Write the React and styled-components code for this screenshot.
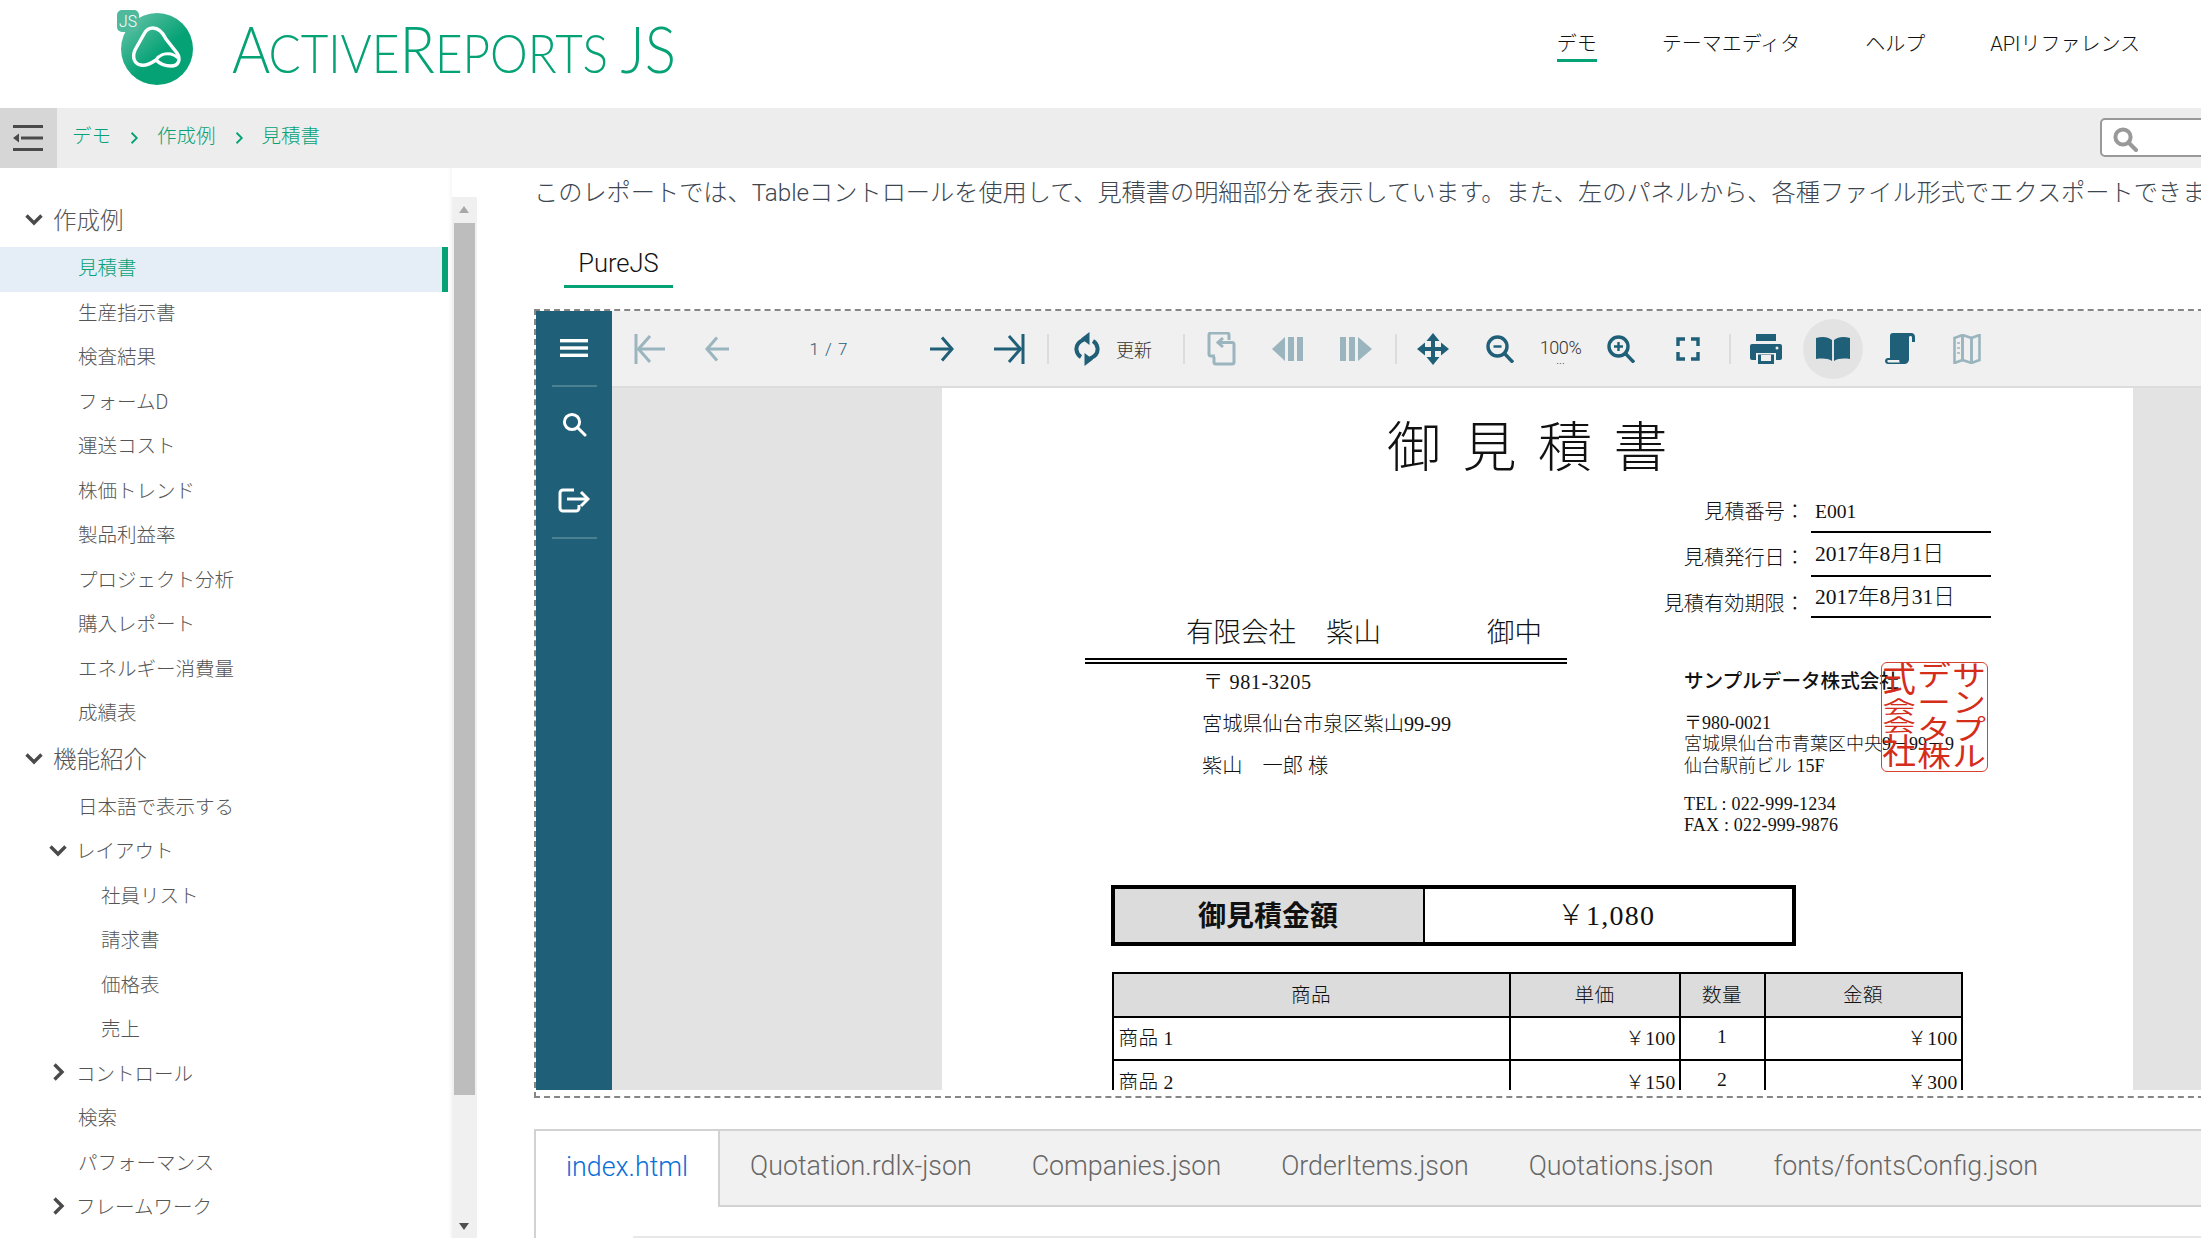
import React from "react";
import styled, { createGlobalStyle } from "styled-components";

const GREEN = "#05a275";
const TEAL = "#1f5f77";
const UI = `"Roboto", "Noto Sans CJK JP", sans-serif`;
const DOC = `"Liberation Serif", "Noto Sans CJK JP", serif`;

const Global = createGlobalStyle`
  html, body { margin: 0; padding: 0; background: #fff; overflow: hidden; }
  body { width: 2201px; height: 1238px; font-family: ${UI}; }
  * { box-sizing: border-box; }
`;

const Shell = styled.div`
  width: 2201px; height: 1238px; overflow: hidden; display: flex; flex-direction: column;
`;

/* header */
const Header = styled.header`
  height: 108px; flex: none; display: flex; align-items: flex-start; justify-content: space-between;
  padding: 0 61px 0 117px;
`;
const Logo = styled.svg`display: block; margin-top: 8px;`;
const Nav = styled.nav`display: flex; gap: 65px; padding-top: 29px;`;
const NavLink = styled.a`
  display: block; height: 33px; font-size: 20px; line-height: 30px; font-weight: 300; color: #111;
  border-bottom: 3px solid ${p => (p.$active ? GREEN : "transparent")};
`;

/* crumbs */
const Crumbs = styled.div`
  height: 60px; flex: none; background: #ededed; display: flex; align-items: center; position: relative;
`;
const MenuToggle = styled.div`
  width: 57px; height: 60px; background: #d6d6d6; display: flex; align-items: center; justify-content: center; padding-right: 2px;
`;
const CrumbList = styled.div`display: flex; align-items: center; margin-left: 15px; gap: 16px;`;
const Crumb = styled.span`font-size: 19.5px; font-weight: 300; color: ${GREEN}; line-height: 1; margin-top: -2px;`;
const SearchBox = styled.div`
  position: absolute; left: 2100px; top: 10px; width: 160px; height: 39px;
  background: #fff; border: 2px solid #999; border-radius: 5px; padding: 6px 0 0 10px;
`;

/* body */
const Body = styled.div`flex: 1; display: flex; min-height: 0;`;
const Sidebar = styled.aside`
  width: 477px; flex: none; display: flex; position: relative; overflow: hidden;
`;
const Tree = styled.div`width: 452px; padding-top: 30px; box-shadow: inset -5px 0 4px -4px #f2f2f2;`;
const GroupTitle = styled.div`
  height: 49px; display: flex; align-items: center; font-size: 23.5px; font-weight: 300; color: #555;
  padding: 0 0 7px 24px; gap: 9px;
`;
const TreeRow = styled.div`
  height: 44.5px; display: flex; align-items: center; font-size: 19.5px; font-weight: 300;
  padding: 0 0 5px ${p => p.$indent}px; gap: ${p => p.$gap || 0}px;
  color: ${p => (p.$active ? GREEN : "#555")};
  margin-right: ${p => (p.$active ? "4px" : "0")};
  background: ${p => (p.$active ? "#e5edf6" : "transparent")};
  border-right: ${p => (p.$active ? `6px solid ${GREEN}` : "none")};
`;
const Scrollbar = styled.div`
  width: 25px; flex: none; background: #f0f0f0; position: relative; margin-top: 29px;
`;
const Thumb = styled.div`
  position: absolute; left: 2px; top: 26px; width: 21px; height: 872px; background: #bdbdbd;
`;
const ArrowUp = styled.div`
  position: absolute; left: 7px; top: 9px; border-left: 5.5px solid transparent; border-right: 5.5px solid transparent;
  border-bottom: 7px solid #a8a8a8;
`;
const ArrowDown = styled.div`
  position: absolute; left: 7px; top: 1026px; border-left: 5.5px solid transparent; border-right: 5.5px solid transparent;
  border-top: 7px solid #505050;
`;

/* main */
const Main = styled.main`flex: 1; min-width: 0; padding-left: 57px; display: flex; flex-direction: column;`;
const Intro = styled.p`
  margin: 0; height: 48px; line-height: 50px; font-size: 24.2px; font-weight: 300; color: #3c4650; white-space: nowrap;
`;
const DemoTabs = styled.div`display: flex; padding-left: 30px; height: 72px; padding-top: 22px;`;
const DemoTab = styled.div`
  width: 109px; height: 50px; text-align: center; font-size: 25.5px; line-height: 50px; font-weight: 300; color: #111;
  border-bottom: 3px solid ${GREEN};
`;
const Viewer = styled.div`
  width: 1700px; height: 789px; flex: none; margin-top: 21px; padding: 0 0 6px 0; border: 2px dashed #868686; border-right: none;
  display: flex; margin-left: 0;
`;
const ViewerSide = styled.div`
  width: 76px; flex: none; background: ${TEAL}; display: flex; flex-direction: column; align-items: center;
`;
const SideBtn = styled.div`
  height: 76px; width: 45px; display: flex; align-items: center; justify-content: center;
  border-bottom: 2px solid ${p => (p.$rule ? "rgba(255,255,255,.2)" : "transparent")}; color: #fff;
`;
const ViewerMain = styled.div`flex: 1; min-width: 0; display: flex; flex-direction: column;`;
const Toolbar = styled.div`
  height: 77px; flex: none; background: #f0f0f0; border-bottom: 2px solid #dcdcdc; display: flex; align-items: center; padding-left: 4px;
`;
const ToolBtn = styled.div`
  width: 67px; height: 60px; flex: none; display: flex; align-items: center; justify-content: center;
  color: ${TEAL}; opacity: ${p => (p.$off ? 0.4 : 1)};
`;
const ActiveBtn = styled.div`
  width: 60px; height: 60px; margin: 0 3.5px; flex: none; border-radius: 50%; background: #e3e3e3; display: flex; align-items: center; justify-content: center; color: ${TEAL};
`;
const Sep = styled.div`
  width: 2px; height: 30px; flex: none; background: #dcdcdc; margin: 0 ${p => p.$r}px 0 ${p => p.$l}px;
`;
const PageLabel = styled.div`
  width: 158px; flex: none; text-align: center; font-size: 17px; font-weight: 300; color: ${TEAL}; letter-spacing: 1px;
`;
const RefreshLabel = styled.div`
  width: 36px; flex: none; margin-left: -4px; font-size: 18px; font-weight: 300; color: #333; white-space: nowrap;
`;
const ZoomLabel = styled.div`
  width: 54px; flex: none; text-align: center; font-size: 18px; font-weight: 300; color: #333; line-height: 18px; padding-top: 4px;
  letter-spacing: -.4px;
`;
const Dots = styled.div`font-size: 12px; line-height: 6px; color: #333; letter-spacing: 0;`;
const Stage = styled.div`
  flex: 1; min-height: 0; background: #e3e3e3; padding-left: 330px; overflow: hidden;
`;
const ReportPage = styled.div`
  width: 1191px; height: 703px; background: #fff; position: relative; overflow: hidden; color: #111;
  font-family: ${DOC}; font-weight: 300;
`;
const Field = styled.div`
  position: absolute; white-space: nowrap; line-height: 30px;
  top: ${p => p.$cy - 15}px;
  ${p => (p.$right !== undefined ? `right: ${1191 - p.$right}px;` : `left: ${p.$x}px;`)}
  font-size: ${p => p.$size || 20.2}px;
  font-weight: ${p => p.$weight || 300};
  letter-spacing: ${p => p.$track || 0}px;
`;
const ReportTitle = styled(Field)`word-spacing: 8px; line-height: 60px; top: 31px;`;
const Rule = styled.div`
  position: absolute; background: #000; height: 2px;
  left: ${p => p.$x}px; width: ${p => p.$w}px; top: ${p => p.$y}px;
`;
const Stamp = styled.div`
  position: absolute; left: 939px; top: 274px; width: 107px; height: 110px; border: 1.5px solid #d8402e; border-radius: 6px;
  display: grid; grid-template-columns: repeat(3, 1fr); color: #d42d1a; overflow: hidden;
`;
const StampCol = styled.div`
  display: flex; flex-direction: column; align-items: center; justify-content: space-between;
`;
const StampChar = styled.span`
  display: block; font-size: 28px; height: ${p => p.$h || 27}px; line-height: ${p => p.$h || 27}px;
  transform: scale(1.2, ${p => p.$sy || 1}); font-weight: 400;
`;
const AmountBox = styled.div`
  position: absolute; left: 169px; top: 497px; width: 685px; height: 61px; border: 4px solid #000; display: flex;
`;
const AmountLabel = styled.div`
  width: 310px; background: #dcdcdc; border-right: 2px solid #000; display: flex; align-items: center; justify-content: center;
  font-size: 28px; font-weight: 700; padding: 0 2px 3px 0;
`;
const AmountValue = styled.div`
  flex: 1; display: flex; align-items: center; justify-content: center; font-size: 28px; padding: 0 5px 6px 0; font-weight: 300; letter-spacing: 1.2px;
`;
const QuoteTable = styled.table`
  position: absolute; left: 169.5px; top: 584px; width: 849px; table-layout: fixed; border-collapse: collapse; font-size: 19.6px;
  border: 2px solid #000; letter-spacing: .3px;
`;
const Cell = styled.td`
  height: 43.5px; padding: 0 3px 3px; border: 2px solid #000; text-align: ${p => p.$align || "center"};
  background: ${p => (p.$head ? "#dcdcdc" : "#fff")}; font-weight: 300;
  padding-left: ${p => (p.$align === "left" ? "5px" : "3px")};
`;

/* code tabs */
const CodePanel = styled.div`
  margin-top: 31px; flex: 1; border-left: 2px solid #d2d2d2; width: 1700px; position: relative;
`;
const CodeTabs = styled.div`
  height: 78px; background: #f1f1f1; border-top: 2px solid #d2d2d2; border-bottom: 2px solid #d2d2d2; display: flex; align-items: stretch;
`;
const CodeTab = styled.div`
  padding: 0 30px; display: flex; align-items: center; font-size: 26.8px; font-weight: 300; white-space: nowrap; padding-bottom: 4px;
  color: ${p => (p.$active ? "#0a6fd6" : "#666")};
  background: ${p => (p.$active ? "#fff" : "transparent")};
  border-right: ${p => (p.$active ? "2px solid #d2d2d2" : "none")};
  margin-bottom: ${p => (p.$active ? "-2px" : "0")};
`;
const CodeLine = styled.div`
  position: absolute; left: 97px; right: 0; top: 107px; height: 2px; background: #e8e8e8;
`;

/* icons */
const Icon = ({ w = 32, h = 32, children, fill = "none", sw = 3 }) => (
  <svg width={w} height={h} viewBox={`0 0 ${w} ${h}`} fill={fill} stroke={fill === "none" ? "currentColor" : "none"} strokeWidth={sw}>
    {children}
  </svg>
);
const Chevron = ({ dir = "down", size = 20, color = "#4a4a4a", sw = 3.4 }) => (
  <svg width={size} height={size} viewBox="0 0 20 20" fill="none" stroke={color} strokeWidth={sw} style={{ flex: "none" }}>
    {dir === "down" ? <path d="M2.5 6.5 10 14l7.5-7.5" /> : <path d="M6.5 2.5 14 10l-7.5 7.5" />}
  </svg>
);

const BrandLogo = () => (
  <Logo width="570" height="84" viewBox="0 0 570 84">
    <defs>
      <linearGradient id="lg" x1="0.1" y1="0.05" x2="0.8" y2="0.85">
        <stop offset="0" stopColor="#62c2a6" />
        <stop offset="0.65" stopColor="#05a275" />
      </linearGradient>
    </defs>
    <circle cx="40" cy="41" r="36" fill="url(#lg)" />
    <rect x="0" y="2" width="22" height="22" rx="5" fill="#4fb99b" />
    <text x="11" y="19" textAnchor="middle" fontFamily="Roboto, sans-serif" fontSize="16" fontWeight="300" fill="#fff" textLength="18" lengthAdjust="spacingAndGlyphs">JS</text>
    <path d="M36 20C42 20 46 25 49 31L60 45C64 51 62 58 54 58C47 58 43 56 39 52C33 56 28 58 24 57C17 56 15 49 18 42L27 26C29 22 32 20 36 20Z" fill="none" stroke="#fff" strokeWidth="3.4" />
    <path d="M39 52C42 47 48 45 54 46C58 47 60 49 61 50" stroke="#fff" strokeWidth="3" fill="none" />
    <text x="115" y="65" fill={GREEN} fontFamily="Lato, Roboto, sans-serif" fontWeight="300" textLength="444" lengthAdjust="spacingAndGlyphs">
      <tspan fontSize="65">A</tspan>
      <tspan fontSize="53" dx="-2">CTIVE</tspan>
      <tspan fontSize="65">R</tspan>
      <tspan fontSize="53">EPORTS</tspan>
      <tspan fontSize="65" dx="14">JS</tspan>
    </text>
  </Logo>
);

const MenuBackIcon = () => (
  <svg width="30" height="26" viewBox="0 0 30 26" fill="#4a4a4a">
    <rect x="0" y="0" width="30" height="3" />
    <rect x="8" y="11.5" width="22" height="3" />
    <rect x="0" y="23" width="30" height="3" />
    <path d="M0 13 6 8.5v9Z" />
  </svg>
);
const SearchGlyph = ({ color = "#999", size = 26, sw = 4 }) => (
  <svg width={size} height={size} viewBox="0 0 26 26" fill="none" stroke={color} strokeWidth={sw}>
    <circle cx="11" cy="11" r="7.6" />
    <path d="m16.5 16.5 7.5 7.5" strokeLinecap="round" />
  </svg>
);

const FirstIcon = () => (
  <Icon w={32} h={32}><path d="M2 1v30" /><path d="M31 16H5" /><path d="M16 3 4.5 16 16 29" /></Icon>
);
const PrevIcon = () => (
  <Icon w={26} h={26}><path d="M25 13H3" /><path d="M13 1.5 3 13l10 11.5" /></Icon>
);
const NextIcon = () => (
  <Icon w={26} h={26}><path d="M1 13h22" /><path d="M13 1.5 23 13 13 24.500" /></Icon>
);
const LastIcon = () => (
  <Icon w={32} h={32}><path d="M30 1v30" /><path d="M1 16h26" /><path d="m16 3 11.500 13L16 29" /></Icon>
);
const RefreshIcon = () => (
  <Icon w={26} h={34} sw={4}>
    <path d="M10 7.500C4 10 2 14 2.500 18c.4 3 2 5.500 4.500 7" />
    <path d="M16 26.500c6-2.500 8-6.500 7.500-10.500-.4-3-2-5.500-4.500-7" />
    <path d="M15.500 0v13L7 6.500Z" fill="currentColor" stroke="none" />
    <path d="M10.500 34V21l8.500 6.500Z" fill="currentColor" stroke="none" />
  </Icon>
);
const GalleyIcon = () => (
  <Icon w={30} h={34} sw={3}>
    <path d="M22 8V3a2 2 0 0 0-2-2H4a2 2 0 0 0-2 2v19a2 2 0 0 0 2 2h4" />
    <path d="M12 10.500h13a2 2 0 0 1 2 2V30a2 2 0 0 1-2 2H9a2 2 0 0 1-2-2v-5" />
    <path d="m16 6-5 4.500 5 4.500" />
  </Icon>
);
const PrevSectionIcon = () => (
  <Icon w={34} h={24} fill="currentColor">
    <path d="M0 12 13 0v24Z" /><rect x="16" y="0" width="6" height="24" /><rect x="25" y="0" width="6" height="24" />
  </Icon>
);
const NextSectionIcon = () => (
  <Icon w={34} h={24} fill="currentColor">
    <rect x="1" y="0" width="6" height="24" /><rect x="10" y="0" width="6" height="24" /><path d="M33 12 19 0v24Z" />
  </Icon>
);
const PanIcon = () => (
  <Icon w={32} h={32} fill="currentColor">
    <path d="M16 0l6.500 8h-4.500v6h6v-4.500L32 16l-8 6.500V18h-6v6h4.500L16 32l-6.500-8H14v-6H8v4.500L0 16l8-6.500V14h6V8H9.500Z" />
  </Icon>
);
const ZoomOutIcon = () => (
  <Icon w={28} h={28} sw={3.4}>
    <circle cx="11.500" cy="11.500" r="9.500" /><path d="m18 18 9 9.500" /><path d="M7.500 11.500h8" strokeWidth="2.400" />
  </Icon>
);
const ZoomInIcon = () => (
  <Icon w={28} h={28} sw={3.4}>
    <circle cx="11.500" cy="11.500" r="9.500" /><path d="m18 18 9 9.500" /><path d="M7 11.500h9M11.500 7v9" strokeWidth="2.400" />
  </Icon>
);
const FullIcon = () => (
  <Icon w={24} h={24} sw={3.4}>
    <path d="M2 9V2h7M15 2h7v7M22 15v7h-7M9 22H2v-7" />
  </Icon>
);
const PrintIcon = () => (
  <Icon w={32} h={30} fill="currentColor">
    <rect x="6" y="0" width="20" height="7" />
    <path d="M2 10h28a2 2 0 0 1 2 2v12a2 2 0 0 1-2 2h-4v-7H6v7H2a2 2 0 0 1-2-2V12a2 2 0 0 1 2-2Z" />
    <path d="M8 20.500h16V30H8Z" />
    <rect x="11" y="21" width="10" height="6" fill="#f0f0f0" />
    <circle cx="27" cy="14" r="1.500" fill="#f0f0f0" />
  </Icon>
);
const BookIcon = () => (
  <Icon w={34} h={28} fill="currentColor">
    <path d="M16 5v21c-4-2.500-9-3-16-2V3c7-2 12-1 16 2Z" />
    <path d="M18 5v21c4-2.500 9-3 16-2V3c-7-2-12-1-16 2Z" />
  </Icon>
);
const ScrollIcon = () => (
  <Icon w={30} h={32} fill="currentColor">
    <path d="M5 3a3 3 0 0 1 3-3h18c2.500 0 4 1.500 4 4v5h-3V4.500c0-1-.6-1.500-1.500-1.500S24 3.500 24 4.500V26c0 3-2 5-5 5H3c-2 0-3-1.500-3-3s1-3 3-3h2Z" />
    <path d="M3 27c-1 .5-1 2.500 1 2.500h11c-1-1-1-2-.5-2.500Z" fill="#f0f0f0" />
  </Icon>
);
const MapIcon = () => (
  <Icon w={28} h={30} sw={2.600}>
    <path d="M1.500 4 9.500 1v25l-8 3Z" fill="none" /><path d="m9.500 1 9 3v25l-9-3Z" /><path d="m18.500 4 8-3v25l-8 3Z" />
    <path d="M4 9h3M4 14h3M4 19h3" strokeWidth="1.600" />
  </Icon>
);
const HamburgerIcon = () => (
  <svg width="28" height="18" viewBox="0 0 28 18" fill="#fff">
    <rect width="28" height="3.400" y="0" /><rect width="28" height="3.400" y="7.300" /><rect width="28" height="3.400" y="14.600" />
  </svg>
);
const ExportIcon = () => (
  <svg width="32" height="28" viewBox="0 0 32 28" fill="none" stroke="#fff" strokeWidth="3">
    <path d="M16 4H5a3 3 0 0 0-3 3v15a3 3 0 0 0 3 3h13a3 3 0 0 0 3-3v-3" />
    <path d="M9 13h20" />
    <path d="m23 6 7 7-7 7" />
  </svg>
);

const items1 = ["生産指示書", "検査結果", "フォームD", "運送コスト", "株価トレンド", "製品利益率", "プロジェクト分析", "購入レポート", "エネルギー消費量", "成績表"];

export default function App() {
  return (
    <Shell>
      <Global />
      <Header>
        <BrandLogo />
        <Nav>
          <NavLink $active>デモ</NavLink>
          <NavLink>テーマエディタ</NavLink>
          <NavLink>ヘルプ</NavLink>
          <NavLink>APIリファレンス</NavLink>
        </Nav>
      </Header>
      <Crumbs>
        <MenuToggle><MenuBackIcon /></MenuToggle>
        <CrumbList>
          <Crumb>デモ</Crumb>
          <Chevron dir="right" size={14} color={GREEN} sw={2.6} />
          <Crumb>作成例</Crumb>
          <Chevron dir="right" size={14} color={GREEN} sw={2.6} />
          <Crumb>見積書</Crumb>
        </CrumbList>
        <SearchBox><SearchGlyph /></SearchBox>
      </Crumbs>
      <Body>
        <Sidebar>
          <Tree>
            <GroupTitle><Chevron />作成例</GroupTitle>
            <TreeRow $indent={78} $active>見積書</TreeRow>
            {items1.map(t => <TreeRow key={t} $indent={78}>{t}</TreeRow>)}
            <GroupTitle><Chevron />機能紹介</GroupTitle>
            <TreeRow $indent={78}>日本語で表示する</TreeRow>
            <TreeRow $indent={48} $gap={8}><Chevron />レイアウト</TreeRow>
            <TreeRow $indent={101}>社員リスト</TreeRow>
            <TreeRow $indent={101}>請求書</TreeRow>
            <TreeRow $indent={101}>価格表</TreeRow>
            <TreeRow $indent={101}>売上</TreeRow>
            <TreeRow $indent={48} $gap={8}><Chevron dir="right" />コントロール</TreeRow>
            <TreeRow $indent={78}>検索</TreeRow>
            <TreeRow $indent={78}>パフォーマンス</TreeRow>
            <TreeRow $indent={48} $gap={8}><Chevron dir="right" />フレームワーク</TreeRow>
          </Tree>
          <Scrollbar><ArrowUp /><Thumb /><ArrowDown /></Scrollbar>
        </Sidebar>
        <Main>
          <Intro>このレポートでは、Tableコントロールを使用して、見積書の明細部分を表示しています。また、左のパネルから、各種ファイル形式でエクスポートできます。</Intro>
          <DemoTabs><DemoTab>PureJS</DemoTab></DemoTabs>
          <Viewer>
            <ViewerSide>
              <SideBtn $rule><HamburgerIcon /></SideBtn>
              <SideBtn><SearchGlyph color="#fff" size={26} sw={3} /></SideBtn>
              <SideBtn $rule><ExportIcon /></SideBtn>
            </ViewerSide>
            <ViewerMain>
              <Toolbar>
                <ToolBtn $off><FirstIcon /></ToolBtn>
                <ToolBtn $off><PrevIcon /></ToolBtn>
                <PageLabel>1 / 7</PageLabel>
                <ToolBtn><NextIcon /></ToolBtn>
                <ToolBtn><LastIcon /></ToolBtn>
                <Sep $l={5} $r={4} />
                <ToolBtn><RefreshIcon /></ToolBtn>
                <RefreshLabel>更新</RefreshLabel>
                <Sep $l={31} $r={3.5} />
                <ToolBtn $off><GalleyIcon /></ToolBtn>
                <ToolBtn $off><PrevSectionIcon /></ToolBtn>
                <ToolBtn $off><NextSectionIcon /></ToolBtn>
                <Sep $l={5.5} $r={2.5} />
                <ToolBtn><PanIcon /></ToolBtn>
                <ToolBtn><ZoomOutIcon /></ToolBtn>
                <ZoomLabel>100%<Dots>...</Dots></ZoomLabel>
                <ToolBtn><ZoomInIcon /></ToolBtn>
                <ToolBtn><FullIcon /></ToolBtn>
                <Sep $l={7} $r={2} />
                <ToolBtn><PrintIcon /></ToolBtn>
                <ActiveBtn><BookIcon /></ActiveBtn>
                <ToolBtn><ScrollIcon /></ToolBtn>
                <ToolBtn $off><MapIcon /></ToolBtn>
              </Toolbar>
              <Stage>
                <ReportPage>
                  <ReportTitle $x={445} $cy={0} $size={54}>御 見 積 書</ReportTitle>
                  <Field $right={863} $cy={124}>見積番号：</Field>
                  <Field $x={873} $cy={124} $size={19.6}>E001</Field>
                  <Rule $x={869} $w={180} $y={143} />
                  <Field $right={863} $cy={170}>見積発行日：</Field>
                  <Field $x={873} $cy={166} $size={21.5}>2017年8月1日</Field>
                  <Rule $x={869} $w={180} $y={187} />
                  <Field $right={863} $cy={216}>見積有効期限：</Field>
                  <Field $x={873} $cy={209} $size={21.5}>2017年8月31日</Field>
                  <Rule $x={869} $w={180} $y={228} />
                  <Field $x={244} $cy={245} $size={27.5}>有限会社</Field>
                  <Field $x={384} $cy={245} $size={27.5}>紫山</Field>
                  <Field $x={545} $cy={245} $size={27.5}>御中</Field>
                  <Rule $x={143} $w={482} $y={270} />
                  <Rule $x={143} $w={482} $y={274} />
                  <Field $x={261} $cy={294} $track={0.6}>〒 981-3205</Field>
                  <Field $x={260} $cy={336}>宮城県仙台市泉区紫山99-99</Field>
                  <Field $x={260} $cy={378}>紫山　一郎 様</Field>
                  <Field $x={742} $cy={294} $weight={500} $size={19.6}>サンプルデータ株式会社</Field>
                  <Field $x={742} $cy={335} $size={18}>〒980-0021</Field>
                  <Field $x={742} $cy={356} $size={18}>宮城県仙台市青葉区中央9－99－9</Field>
                  <Field $x={742} $cy={378} $size={18}>仙台駅前ビル 15F</Field>
                  <Field $x={742} $cy={416} $size={18} $track={0.2}>TEL : 022-999-1234</Field>
                  <Field $x={742} $cy={437} $size={18} $track={0.2}>FAX : 022-999-9876</Field>
                  <Stamp>
                    <StampCol>
                      <StampChar $h={35} $sy={1.25}>式</StampChar>
                      <StampChar $h={17} $sy={0.65}>会</StampChar>
                      <StampChar $h={17} $sy={0.65}>会</StampChar>
                      <StampChar $h={36} $sy={1.25}>社</StampChar>
                    </StampCol>
                    <StampCol><StampChar>デ</StampChar><StampChar>ー</StampChar><StampChar>タ</StampChar><StampChar>株</StampChar></StampCol>
                    <StampCol><StampChar>サ</StampChar><StampChar>ン</StampChar><StampChar>プ</StampChar><StampChar>ル</StampChar></StampCol>
                  </Stamp>
                  <AmountBox>
                    <AmountLabel>御見積金額</AmountLabel>
                    <AmountValue>￥1,080</AmountValue>
                  </AmountBox>
                  <QuoteTable>
                    <colgroup><col style={{ width: 397 }} /><col style={{ width: 170 }} /><col style={{ width: 85 }} /><col style={{ width: 197 }} /></colgroup>
                    <tbody>
                      <tr><Cell $head>商品</Cell><Cell $head>単価</Cell><Cell $head>数量</Cell><Cell $head>金額</Cell></tr>
                      <tr><Cell $align="left">商品 1</Cell><Cell $align="right">￥100</Cell><Cell>1</Cell><Cell $align="right">￥100</Cell></tr>
                      <tr><Cell $align="left">商品 2</Cell><Cell $align="right">￥150</Cell><Cell>2</Cell><Cell $align="right">￥300</Cell></tr>
                    </tbody>
                  </QuoteTable>
                </ReportPage>
              </Stage>
            </ViewerMain>
          </Viewer>
          <CodePanel>
            <CodeTabs>
              <CodeTab $active>index.html</CodeTab>
              <CodeTab>Quotation.rdlx-json</CodeTab>
              <CodeTab>Companies.json</CodeTab>
              <CodeTab>OrderItems.json</CodeTab>
              <CodeTab>Quotations.json</CodeTab>
              <CodeTab>fonts/fontsConfig.json</CodeTab>
            </CodeTabs>
            <CodeLine />
          </CodePanel>
        </Main>
      </Body>
    </Shell>
  );
}
